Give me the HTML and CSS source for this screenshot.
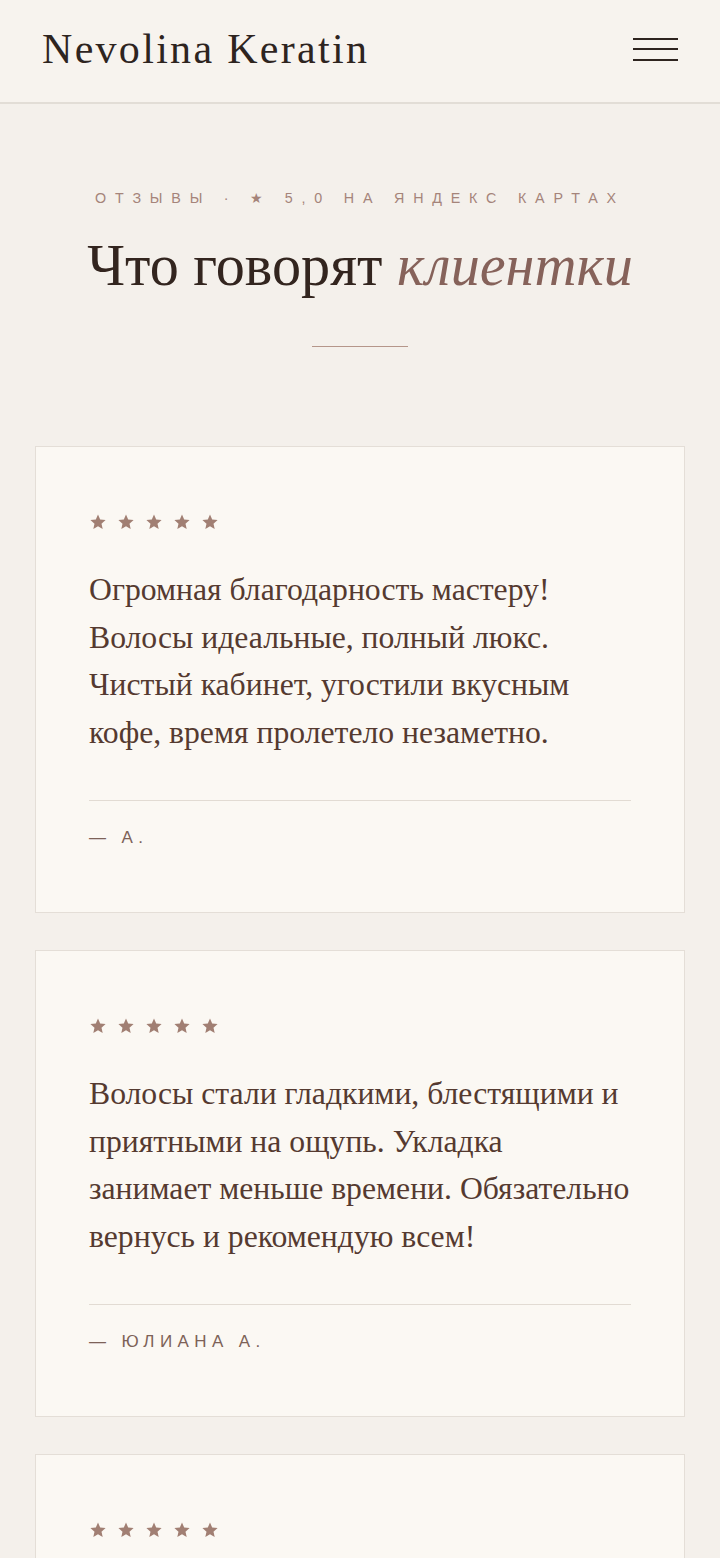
FILE: index.html
```html
<!DOCTYPE html>
<html lang="ru">
<head>
<meta charset="utf-8">
<title>Nevolina Keratin — Отзывы</title>
<link rel="stylesheet" href="styles.css">
</head>
<body>
<header class="site-header">
  <div class="logo">Nevolina Keratin</div>
  <button class="burger" aria-label="Меню">
    <span></span><span></span><span></span>
  </button>
</header>
<main class="reviews">
  <div class="section-head">
    <p class="eyebrow">Отзывы · ★ 5,0 на Яндекс Картах</p>
    <h2 class="title">Что говорят <em>клиентки</em></h2>
    <div class="divider"></div>
  </div>
  <article class="card">
    <div class="stars" aria-label="5 звёзд">
      <svg viewBox="0 0 16 16"><polygon points="8,0.6 10.2,5.6 15.6,6.1 11.5,9.7 12.7,15 8,12.2 3.3,15 4.5,9.7 0.4,6.1 5.8,5.6"/></svg>
      <svg viewBox="0 0 16 16"><polygon points="8,0.6 10.2,5.6 15.6,6.1 11.5,9.7 12.7,15 8,12.2 3.3,15 4.5,9.7 0.4,6.1 5.8,5.6"/></svg>
      <svg viewBox="0 0 16 16"><polygon points="8,0.6 10.2,5.6 15.6,6.1 11.5,9.7 12.7,15 8,12.2 3.3,15 4.5,9.7 0.4,6.1 5.8,5.6"/></svg>
      <svg viewBox="0 0 16 16"><polygon points="8,0.6 10.2,5.6 15.6,6.1 11.5,9.7 12.7,15 8,12.2 3.3,15 4.5,9.7 0.4,6.1 5.8,5.6"/></svg>
      <svg viewBox="0 0 16 16"><polygon points="8,0.6 10.2,5.6 15.6,6.1 11.5,9.7 12.7,15 8,12.2 3.3,15 4.5,9.7 0.4,6.1 5.8,5.6"/></svg>
    </div>
    <p class="quote">Огромная благодарность мастеру! Волосы идеальные, полный люкс. Чистый кабинет, угостили вкусным кофе, время пролетело незаметно.</p>
    <div class="author">— А.</div>
  </article>
  <article class="card">
    <div class="stars" aria-label="5 звёзд">
      <svg viewBox="0 0 16 16"><polygon points="8,0.6 10.2,5.6 15.6,6.1 11.5,9.7 12.7,15 8,12.2 3.3,15 4.5,9.7 0.4,6.1 5.8,5.6"/></svg>
      <svg viewBox="0 0 16 16"><polygon points="8,0.6 10.2,5.6 15.6,6.1 11.5,9.7 12.7,15 8,12.2 3.3,15 4.5,9.7 0.4,6.1 5.8,5.6"/></svg>
      <svg viewBox="0 0 16 16"><polygon points="8,0.6 10.2,5.6 15.6,6.1 11.5,9.7 12.7,15 8,12.2 3.3,15 4.5,9.7 0.4,6.1 5.8,5.6"/></svg>
      <svg viewBox="0 0 16 16"><polygon points="8,0.6 10.2,5.6 15.6,6.1 11.5,9.7 12.7,15 8,12.2 3.3,15 4.5,9.7 0.4,6.1 5.8,5.6"/></svg>
      <svg viewBox="0 0 16 16"><polygon points="8,0.6 10.2,5.6 15.6,6.1 11.5,9.7 12.7,15 8,12.2 3.3,15 4.5,9.7 0.4,6.1 5.8,5.6"/></svg>
    </div>
    <p class="quote">Волосы стали гладкими, блестящими и приятными на ощупь. Укладка занимает меньше времени. Обязательно вернусь и рекомендую всем!</p>
    <div class="author">— Юлиана А.</div>
  </article>
  <article class="card">
    <div class="stars" aria-label="5 звёзд">
      <svg viewBox="0 0 16 16"><polygon points="8,0.6 10.2,5.6 15.6,6.1 11.5,9.7 12.7,15 8,12.2 3.3,15 4.5,9.7 0.4,6.1 5.8,5.6"/></svg>
      <svg viewBox="0 0 16 16"><polygon points="8,0.6 10.2,5.6 15.6,6.1 11.5,9.7 12.7,15 8,12.2 3.3,15 4.5,9.7 0.4,6.1 5.8,5.6"/></svg>
      <svg viewBox="0 0 16 16"><polygon points="8,0.6 10.2,5.6 15.6,6.1 11.5,9.7 12.7,15 8,12.2 3.3,15 4.5,9.7 0.4,6.1 5.8,5.6"/></svg>
      <svg viewBox="0 0 16 16"><polygon points="8,0.6 10.2,5.6 15.6,6.1 11.5,9.7 12.7,15 8,12.2 3.3,15 4.5,9.7 0.4,6.1 5.8,5.6"/></svg>
      <svg viewBox="0 0 16 16"><polygon points="8,0.6 10.2,5.6 15.6,6.1 11.5,9.7 12.7,15 8,12.2 3.3,15 4.5,9.7 0.4,6.1 5.8,5.6"/></svg>
    </div>
    <p class="quote">Очень довольна результатом! Мастер всё подробно объяснила, волосы мягкие и послушные.</p>
    <div class="author">— М.</div>
  </article>
</main>
</body>
</html>
```
FILE: styles.css
```css
* { box-sizing: border-box; }
html, body { margin: 0; padding: 0; }
body {
  background: #f4f0eb;
  font-family: "Liberation Serif", "Times New Roman", serif;
  color: #3a2a24;
}
.site-header {
  height: 104px;
  background: #f7f3ee;
  border-bottom: 2px solid #e2ddd6;
  display: flex;
  align-items: center;
  justify-content: space-between;
  padding: 0 42px 4px 42px;
}
.logo {
  font-family: "Liberation Serif", serif;
  font-size: 42px;
  letter-spacing: 2.3px;
  color: #2e241f;
}
.burger {
  background: none;
  border: 0;
  padding: 0;
  width: 45px;
  height: 23px;
  display: flex;
  flex-direction: column;
  justify-content: space-between;
}
.burger span {
  display: block;
  height: 2px;
  background: #2e241f;
}
.reviews {
  padding: 0 35px 40px;
}
.section-head {
  text-align: center;
  padding-top: 84px;
  padding-bottom: 99px;
}
.eyebrow {
  margin: 0;
  font-family: "Liberation Sans", Arial, sans-serif;
  font-size: 14.3px;
  letter-spacing: 8.8px;
  text-transform: uppercase;
  color: #a5847a;
  line-height: 20px;
}
.title {
  margin: 25px 0 0;
  font-weight: normal;
  font-size: 58.2px;
  line-height: 66px;
  color: #33251f;
}
.title em {
  color: #86625a;
}
.divider {
  width: 96px;
  height: 1px;
  background: #b5968a;
  margin: 47px auto 0;
}
.card {
  background: #fbf8f3;
  border: 1px solid #e4ded7;
  padding: 63px 53px 64px;
  margin-bottom: 37px;
}
.stars {
  display: flex;
  align-items: center;
  gap: 12px;
  height: 24px;
  padding-left: 1px;
}
.stars svg {
  width: 16px;
  height: 16px;
  fill: #a17f73;
}
.quote {
  margin: 32px 0 0;
  font-size: 31.7px;
  line-height: 47.5px;
  color: #553a30;
  padding-bottom: 44px;
  border-bottom: 1px solid #e2dbd3;
}
.author {
  margin-top: 27px;
  font-family: "Liberation Sans", Arial, sans-serif;
  font-size: 17px;
  line-height: 20px;
  letter-spacing: 5.4px;
  text-transform: uppercase;
  color: #7d6258;
}
```
